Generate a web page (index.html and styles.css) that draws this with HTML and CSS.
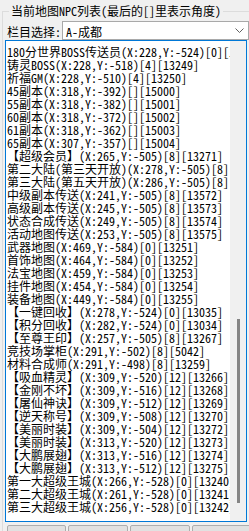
FILE: index.html
```html
<!DOCTYPE html>
<html lang="zh-CN">
<head>
<meta charset="utf-8">
<title>当前地图NPC列表</title>
<link rel="stylesheet" href="styles.css">
</head>
<body>
<div class="group">
  <div class="group-title">当前地图NPC列表(最后的[]里表示角度)</div>
  <div class="field-row">
    <span class="field-label">栏目选择:</span>
    <div class="combo">
      <span class="combo-value">A-成都</span>
      <svg class="combo-arrow" width="9" height="5" viewBox="0 0 9 5"><polyline points="0.5,0.5 4.5,4.5 8.5,0.5" fill="none" stroke="#606060" stroke-width="1"/></svg>
    </div>
  </div>
  <div class="listbox">
    <ul class="list-items">
      <li>180分世界BOSS传送员(X:228,Y:-524)[0][13248]</li>
      <li>铸灵BOSS(X:228,Y:-518)[4][13249]</li>
      <li>祈福GM(X:228,Y:-510)[4][13250]</li>
      <li>45副本(X:318,Y:-392)[][15000]</li>
      <li>55副本(X:318,Y:-382)[][15001]</li>
      <li>60副本(X:318,Y:-372)[][15002]</li>
      <li>61副本(X:318,Y:-362)[][15003]</li>
      <li>65副本(X:307,Y:-357)[][15004]</li>
      <li>【超级会员】(X:265,Y:-505)[8][13271]</li>
      <li>第二大陆(第三天开放)(X:278,Y:-505)[8][13576]</li>
      <li>第三大陆(第五天开放)(X:286,Y:-505)[8][13577]</li>
      <li>中级副本传送(X:241,Y:-505)[8][13572]</li>
      <li>高级副本传送(X:245,Y:-505)[8][13573]</li>
      <li>状态合成传送(X:249,Y:-505)[8][13574]</li>
      <li>活动地图传送(X:253,Y:-505)[8][13575]</li>
      <li>武器地图(X:469,Y:-584)[0][13251]</li>
      <li>首饰地图(X:464,Y:-584)[0][13252]</li>
      <li>法宝地图(X:459,Y:-584)[0][13253]</li>
      <li>挂件地图(X:454,Y:-584)[0][13254]</li>
      <li>装备地图(X:449,Y:-584)[0][13255]</li>
      <li>【一键回收】(X:278,Y:-524)[0][13035]</li>
      <li>【积分回收】(X:282,Y:-524)[0][13034]</li>
      <li>【至尊王印】(X:257,Y:-505)[8][13267]</li>
      <li>竞技场掌柜(X:291,Y:-502)[8][5042]</li>
      <li>材料合成师(X:291,Y:-498)[8][13259]</li>
      <li>【吸血精灵】(X:309,Y:-520)[12][13266]</li>
      <li>【金刚不坏】(X:309,Y:-516)[12][13268]</li>
      <li>【屠仙神诀】(X:309,Y:-512)[12][13269]</li>
      <li>【逆天称号】(X:309,Y:-508)[12][13270]</li>
      <li>【美丽时装】(X:309,Y:-504)[12][13272]</li>
      <li>【美丽时装】(X:313,Y:-520)[12][13273]</li>
      <li>【大鹏展翅】(X:313,Y:-516)[12][13274]</li>
      <li>【大鹏展翅】(X:313,Y:-512)[12][13275]</li>
      <li>第一大超级王城(X:266,Y:-528)[0][13240]</li>
      <li>第二大超级王城(X:261,Y:-528)[0][13241]</li>
      <li>第三大超级王城(X:256,Y:-528)[0][13242]</li>
    </ul>
    <div class="vscroll"><div class="vscroll-thumb"></div></div>
  </div>
  <div class="button-row">
    <button class="btn btn-first" type="button"></button>
    <button class="btn" type="button"></button>
    <button class="btn" type="button"></button>
    <button class="btn" type="button"></button>
  </div>
</div>
</body>
</html>
```

FILE: styles.css
```css
html, body {
  margin: 0;
  padding: 0;
  background: #f0f0f0;
  overflow: hidden;
}

body {
  width: 249px;
  height: 531px;
  font-family: "Noto Sans Mono CJK SC", "Noto Sans CJK SC", sans-serif;
  font-size: 12px;
  line-height: 13px;
  color: #000;
  font-feature-settings: "hwid" 1;
}

.group {
  margin: 11px -10px 0 2px;
  border-top: 1px solid #dcdcdc;
  border-left: 1px solid #dcdcdc;
}

.group-title {
  width: max-content;
  margin: -8px 0 0 6px;
  padding: 0 2px;
  background: #f0f0f0;
  white-space: nowrap;
}

.field-row {
  display: flex;
  align-items: center;
  margin-top: 4px;
  padding-left: 4px;
}

.field-label {
  white-space: nowrap;
  padding-top: 1px;
}

.combo {
  flex: none;
  width: 187px;
  height: 19px;
  box-sizing: border-box;
  margin-left: 1px;
  padding: 1px 4px 0 3px;
  border: 1px solid #a9a9a9;
  background: #fff;
  display: flex;
  align-items: center;
  justify-content: space-between;
}

.combo-arrow {
  display: block;
  margin-top: -1px;
}

.listbox {
  margin-left: 2px;
  width: 242px;
  height: 482px;
  box-sizing: border-box;
  border: 1px solid #0078d7;
  background: #fff;
  display: flex;
}

.list-items {
  flex: 1;
  min-width: 0;
  margin: 0;
  padding: 4px 0 0 1px;
  list-style: none;
  overflow: hidden;
  white-space: nowrap;
}

.vscroll {
  flex: none;
  width: 16px;
  box-sizing: border-box;
  padding: 0 0 18px 7px;
  background: #f0f0f0;
  display: flex;
  flex-direction: column;
  justify-content: flex-end;
}

.vscroll-thumb {
  width: 3px;
  height: 184px;
  background: #858585;
}

.button-row {
  display: flex;
  gap: 2px;
  margin-top: 3px;
  padding-left: 4px;
}

.btn {
  flex: none;
  width: 60px;
  height: 23px;
  margin: 0;
  padding: 0;
  border: 1px solid #adadad;
  border-radius: 2px;
  background: #e1e1e1;
}

.btn-first {
  width: 59px;
}
```
